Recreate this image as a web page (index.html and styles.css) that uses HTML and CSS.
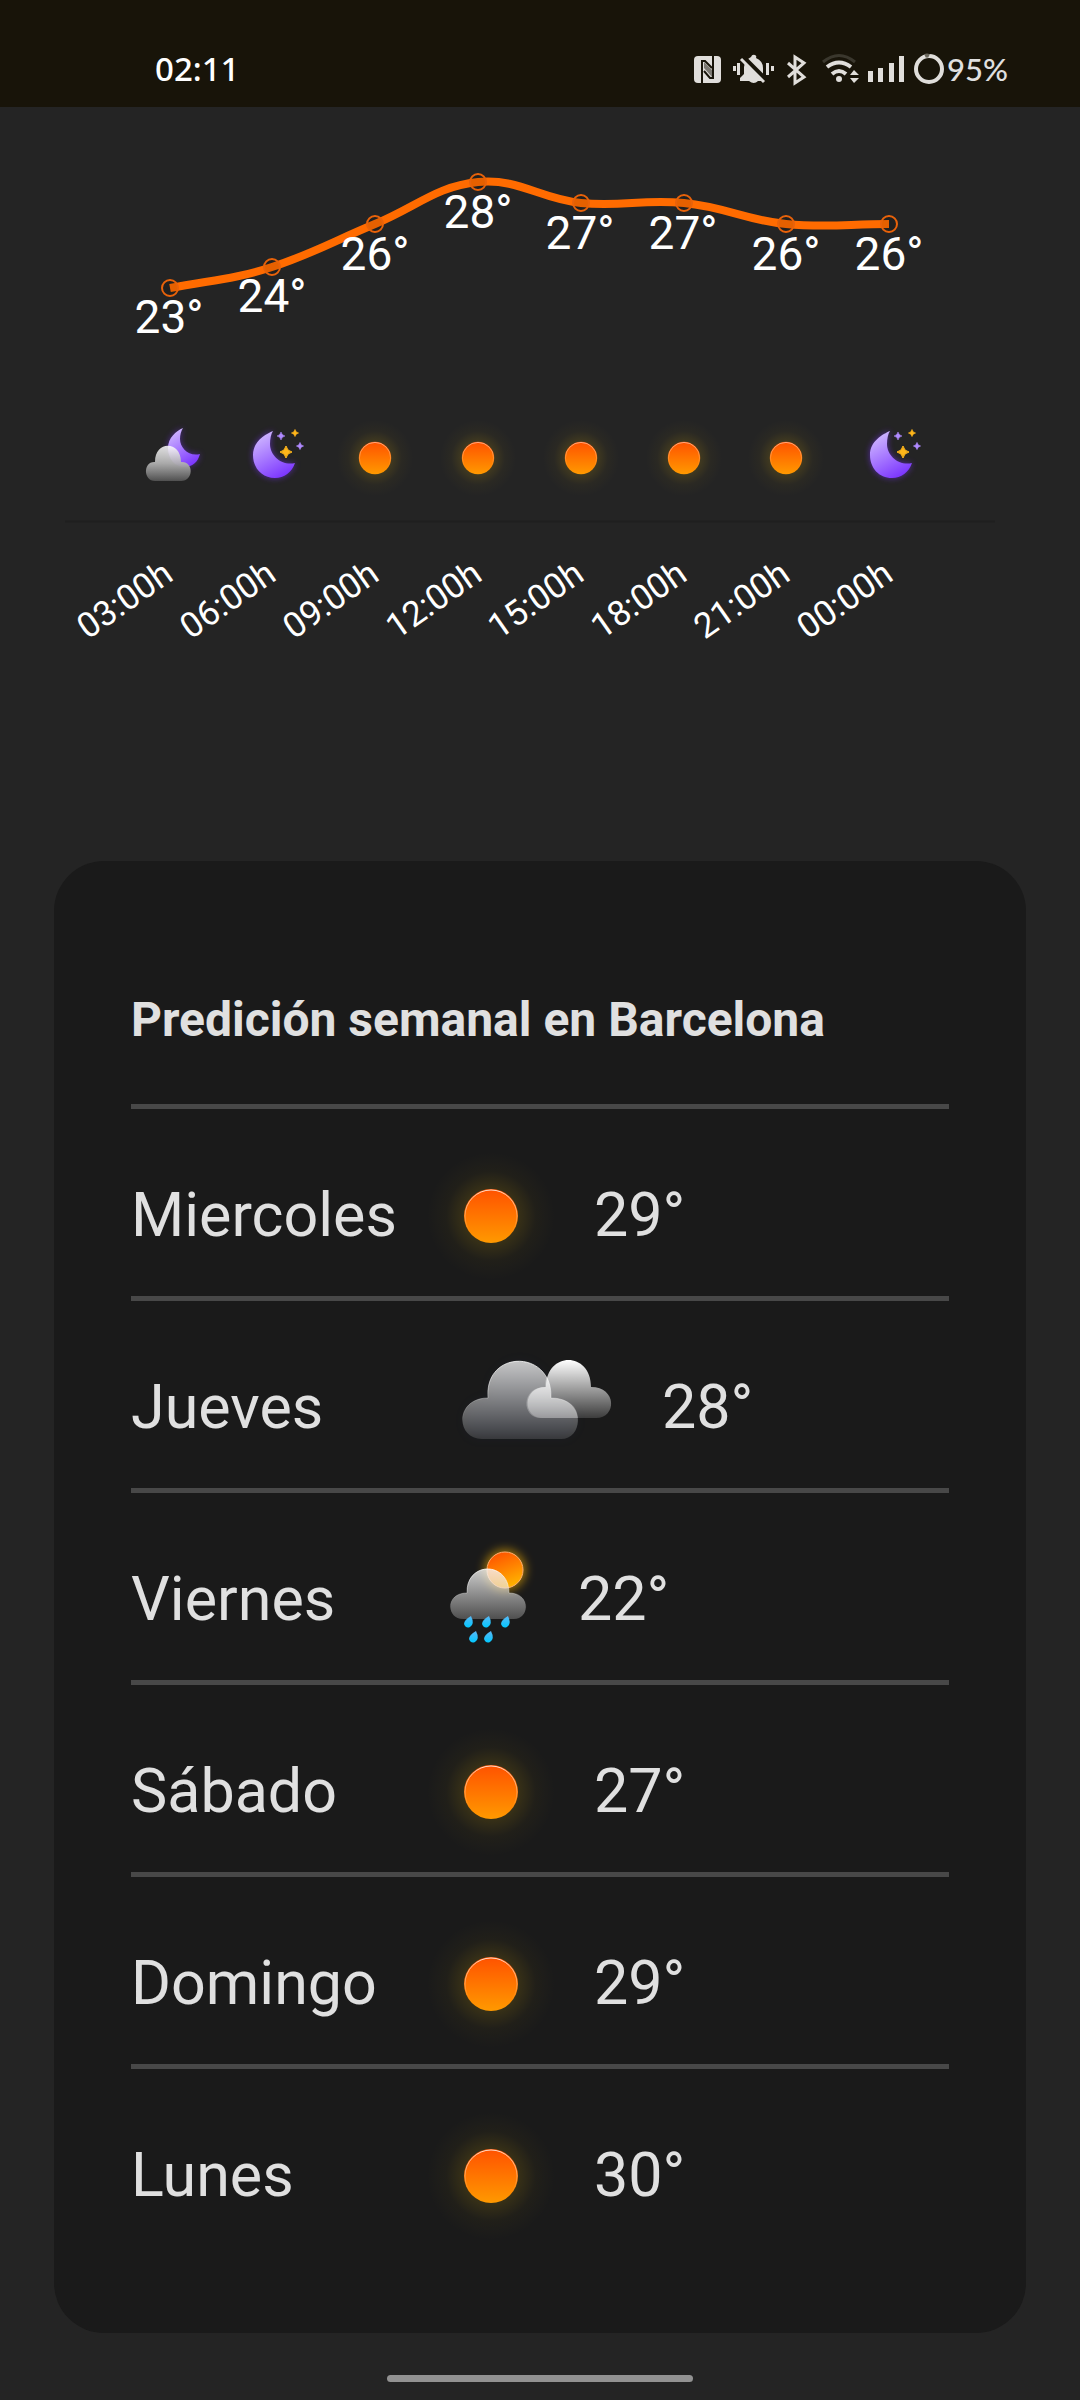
FILE: index.html
```html
<!DOCTYPE html>
<html lang="es">
<head>
<meta charset="utf-8">
<meta name="viewport" content="width=device-width, initial-scale=1">
<title>Barcelona</title>
<link rel="stylesheet" href="styles.css">
</head>
<body>
<svg class="defs" aria-hidden="true">
  <defs>
    <linearGradient id="sunFill" x1="0" y1="0" x2="0" y2="1"><stop offset="0" stop-color="#ff5200"/><stop offset="1" stop-color="#ff9900"/></linearGradient>
    <linearGradient id="rainSun" x1="0.3" y1="0" x2="0.7" y2="1"><stop offset="0" stop-color="#ff5200"/><stop offset="1" stop-color="#ffb800"/></linearGradient>
    <linearGradient id="rim" x1="0" y1="0" x2="0" y2="1"><stop offset="0" stop-color="#fff" stop-opacity=".8"/><stop offset=".8" stop-color="#fff" stop-opacity="0"/></linearGradient>
    <linearGradient id="cloudFill" x1="0" y1="0" x2="0" y2="1"><stop offset="0" stop-color="#fff"/><stop offset="1" stop-color="#fff" stop-opacity=".15"/></linearGradient>
    <linearGradient id="frontCloud" x1="0" y1="0" x2="0" y2="1"><stop offset="0" stop-color="#fff" stop-opacity=".75"/><stop offset="1" stop-color="#fff" stop-opacity=".13"/></linearGradient>
    <linearGradient id="nightCloud" x1="0" y1="0" x2="0" y2="1"><stop offset="0" stop-color="#fff" stop-opacity=".85"/><stop offset=".5" stop-color="#b0b0b0" stop-opacity=".95"/><stop offset="1" stop-color="#505050"/></linearGradient>
    <linearGradient id="moonFill" x1="0.2" y1="0" x2="0.7" y2="1"><stop offset="0" stop-color="#d3bdff"/><stop offset="1" stop-color="#7a33ff"/></linearGradient>
    <linearGradient id="dropFill" x1="0" y1="0" x2="0" y2="1"><stop offset="0" stop-color="#5cb8f5"/><stop offset="1" stop-color="#00c8ff"/></linearGradient>
    <radialGradient id="sunGlow"><stop offset="0" stop-color="#ffc800" stop-opacity=".24"/><stop offset=".42" stop-color="#ffc800" stop-opacity=".13"/><stop offset=".7" stop-color="#ffc800" stop-opacity=".03"/><stop offset="1" stop-color="#ffc800" stop-opacity="0"/></radialGradient>
    <filter id="blur" x="-50%" y="-50%" width="200%" height="200%"><feGaussianBlur stdDeviation="5"/></filter>
    <filter id="smallBlur" x="-50%" y="-50%" width="200%" height="200%"><feGaussianBlur stdDeviation="3"/></filter>
    <path id="moonShape" d="M153 431C146 434 133 441 133 455C133 468 142 478 155 478C164 478 172 472 175 463C162 466 150 456 150 444C150 439 151 434 153 431Z"/>
    <path id="starShape" d="M0-6Q1-1 6 0Q1 1 0 6Q-1 1-6 0Q-1-1 0-6Z"/>

    <g id="sun">
      <circle r="64" fill="url(#sunGlow)"/>
      <circle r="27" fill="url(#sunFill)"/>
      <circle r="26" fill="none" stroke="url(#rim)" stroke-width="1"/>
    </g>
    <g id="moon">
      <use href="#moonShape" fill="#7a33ff" opacity=".6" filter="url(#smallBlur)"/>
      <use href="#moonShape" fill="url(#moonFill)"/>
      <use href="#starShape" transform="translate(166 452)" fill="#ffb61a" stroke="#ffb61a"/>
      <g fill="#b08aff" stroke="#b08aff">
        <use href="#starShape" transform="translate(161 436) scale(.65)"/>
        <use href="#starShape" transform="translate(180 446) scale(.6)"/>
      </g>
      <use href="#starShape" transform="translate(175 433) scale(.6)" fill="#ffb61a" stroke="#ffb61a"/>
    </g>
    <g id="night">
      <path d="M183 428C176 431 168 438 168 448C168 459 175 467 185 467C192 467 198 462 200 454C189 457 180 448 180 439C180 435 181 431 183 428Z" fill="#7a33ff" opacity=".5" filter="url(#smallBlur)"/>
      <path d="M183 428C176 431 168 438 168 448C168 459 175 467 185 467C192 467 198 462 200 454C189 457 180 448 180 439C180 435 181 431 183 428Z" fill="url(#moonFill)"/>
      <path d="M155 462C155 440 181 441 181 462C194 461 194 481 181 481H155C143 481 143 461 155 462Z" fill="url(#nightCloud)"/>
    </g>
  </defs>
</svg>

<header class="status">
  <time class="clock">02:11</time>
  <svg class="status-icons" viewBox="690 50 256 36" role="img" aria-label="NFC, silencio, Bluetooth, wifi, señal, batería">
    <rect x="693" y="55" width="27" height="27" rx="4" fill="#e0dedb"/>
    <path d="M701 82V60H704L711 67M712 55V77H709L703 70" fill="none" stroke="#181409" stroke-width="2"/>
    <path d="M703 61L711 69V76L703 67Z" fill="#181409" opacity=".5"/>
    <g fill="#e0dedb">
      <path d="M750 56Q751 53 754 54Q756 55 755 57Q762 60 762 67V74L766 78V80H739V77L743 73V66Q744 59 750 56ZM748 80H757Q753 84 748 80Z"/>
      <path d="M732 65h3v5h-3zM736 62h3v12h-3zM765 62h3v12h-3zM770 65h3v5h-3z"/>
    </g>
    <path d="M742 56L766 80" stroke="#181409" stroke-width="5"/>
    <path d="M740 58L763 81" stroke="#e0dedb" stroke-width="3"/>
    <path d="M787 62L803 76L794 82V56L803 62L787 76" fill="none" stroke="#e0dedb" stroke-width="3"/>
    <path d="M822 61Q838 48 854 61" fill="none" stroke="#3a372d" stroke-width="3"/>
    <path d="M826 66Q838 57 850 66M831 73Q838 67 845 73" fill="none" stroke="#e0dedb" stroke-width="4"/>
    <circle cx="838" cy="78" r="3" fill="#e0dedb"/>
    <path d="M849 74L853 69L858 74ZM849 77H858L853 82ZM867 70h5v11h-5zM877 67h5v14h-5zM888 62h5v19h-5zM898 55h5v26h-5z" fill="#e0dedb"/>
    <circle cx="928" cy="68" r="13" fill="none" stroke="#e0dedb" stroke-width="4"/>
    <path d="M924 55Q926 54 928 55" fill="none" stroke="#6a675d" stroke-width="4"/>
  </svg>
  <span class="battery">95%</span>
</header>

<main>
  <svg class="chart" viewBox="0 107 1080 754" role="img" aria-label="Temperatura por horas">
    <path d="M65 521.5H995" stroke="#1f1f1f" stroke-width="2"/>
    <path class="curve" d="M170 288C211 280 232 280 272 267S334 241 375 224S437 186 478 182S540 199 581 203S642 199 684 203S745 220 786 224S848 224 889 224"/>
    <g class="points">
      <circle cx="170" cy="288" r="8"/><circle cx="272" cy="267" r="8"/><circle cx="375" cy="224" r="8"/><circle cx="478" cy="182" r="8"/>
      <circle cx="581" cy="203" r="8"/><circle cx="684" cy="203" r="8"/><circle cx="786" cy="224" r="8"/><circle cx="889" cy="224" r="8"/>
    </g>
    <g class="temps">
      <text x="169" y="333">23°</text><text x="272" y="312">24°</text><text x="375" y="270">26°</text><text x="478" y="228">28°</text>
      <text x="580" y="249">27°</text><text x="683" y="249">27°</text><text x="786" y="270">26°</text><text x="889" y="270">26°</text>
    </g>
    <use href="#night"/>
    <use href="#moon" x="120"/>
    <use href="#sun" transform="translate(375 458) scale(.6)"/>
    <use href="#sun" transform="translate(478 458) scale(.6)"/>
    <use href="#sun" transform="translate(581 458) scale(.6)"/>
    <use href="#sun" transform="translate(684 458) scale(.6)"/>
    <use href="#sun" transform="translate(786 458) scale(.6)"/>
    <use href="#moon" x="737"/>
    <g class="hours">
      <text transform="translate(175 579) rotate(-35)">03:00h</text>
      <text transform="translate(278 579) rotate(-35)">06:00h</text>
      <text transform="translate(381 579) rotate(-35)">09:00h</text>
      <text transform="translate(484 579) rotate(-35)">12:00h</text>
      <text transform="translate(586 579) rotate(-35)">15:00h</text>
      <text transform="translate(689 579) rotate(-35)">18:00h</text>
      <text transform="translate(792 579) rotate(-35)">21:00h</text>
      <text transform="translate(895 579) rotate(-35)">00:00h</text>
    </g>
  </svg>

  <section class="card">
    <h1>Predición semanal en Barcelona</h1>
    <ul class="week">
      <li><span class="day">Miercoles</span><svg class="icon" viewBox="-60 -42 120 82"><use href="#sun"/></svg><span>29°</span></li>
      <li><span class="day">Jueves</span>
        <svg class="icon wide" viewBox="431 1366 188 82">
          <path d="M479 1439C458 1439 457 1398 488 1398C488 1348 552 1348 552 1398C584 1398 584 1439 561 1439Z" fill="#1a2a5a" opacity=".12" filter="url(#blur)"/>
          <path d="M543 1418C522 1418 522 1387 546 1387C546 1351 591 1351 591 1387C617 1387 617 1418 596 1418Z" fill="url(#cloudFill)"/>
          <path d="M482 1439C455 1439 455 1398 488 1398C484 1349 553 1349 551 1398C586 1398 584 1439 561 1439Z" fill="url(#frontCloud)" stroke="url(#rim)"/>
          <path d="M541 1418C521 1418 521 1387 545 1387Q545 1380 547 1376Q551 1385 551 1398C567 1398 577 1405 578 1418Z" fill="#fff" opacity=".25"/>
        </svg><span>28°</span></li>
      <li><span class="day">Viernes</span>
        <svg class="icon narrow" viewBox="431 1558 104 82">
          <circle cx="505" cy="1570" r="21" fill="#ffb800" opacity=".55" filter="url(#blur)"/>
          <circle cx="505" cy="1570" r="18" fill="url(#rainSun)" stroke="#ffad70" stroke-width="1"/>
          <path d="M463 1619C446 1619 445 1593 467 1593C466 1561 509 1561 509 1593C531 1593 530 1619 514 1619Z" fill="#888" opacity=".25"/>
          <path d="M463 1619C446 1619 445 1593 467 1593C466 1561 509 1561 509 1593C531 1593 530 1619 514 1619Z" fill="url(#frontCloud)" stroke="url(#rim)"/>
          <g fill="url(#dropFill)">
            <path id="drop" d="M471 1616Q464 1620 464 1624Q466 1629 470 1627Q475 1624 471 1616Z"/>
            <use href="#drop" x="18"/><use href="#drop" x="37"/><use href="#drop" x="5" y="15"/><use href="#drop" x="20" y="15"/>
          </g>
        </svg><span>22°</span></li>
      <li><span class="day">Sábado</span><svg class="icon" viewBox="-60 -42 120 82"><use href="#sun"/></svg><span>27°</span></li>
      <li><span class="day">Domingo</span><svg class="icon" viewBox="-60 -42 120 82"><use href="#sun"/></svg><span>29°</span></li>
      <li><span class="day">Lunes</span><svg class="icon" viewBox="-60 -42 120 82"><use href="#sun"/></svg><span>30°</span></li>
    </ul>
  </section>
</main>
<footer class="gesture"></footer>
</body>
</html>
```
FILE: styles.css
```css
* { box-sizing: border-box; }

body {
  margin: 0;
  background: #242424;
  color: #e0e0e0;
  font-family: Roboto, "Liberation Sans", sans-serif;
}

.defs { position: absolute; width: 0; height: 0; }

.status {
  display: flex;
  align-items: center;
  height: 107px;
  padding: 30px 72px 0 155px;
  background: #181409;
}
.clock {
  margin-right: auto;
  color: #fff;
  font: 500 33px/40px "Noto Sans", sans-serif;
}
.status-icons { width: 256px; height: 36px; }
.battery { font: 500 31px/40px Lato, sans-serif; }

.chart { display: block; width: 100%; overflow: visible; }
.curve { fill: none; stroke: #ff6b00; stroke-width: 8; }
.points { fill: rgba(0, 0, 0, .1); stroke: #e8620a; stroke-width: 2; }
.temps { fill: #fff; font-size: 46px; text-anchor: middle; }
.hours { fill: #fff; font-size: 35px; text-anchor: end; }

.card {
  margin: 0 5%;
  padding: 77px;
  border-radius: 50px;
  background: #1a1a1a;
}
h1 {
  margin: 0;
  padding: 53px 0 55px;
  font-size: 48px;
  font-weight: 700;
  line-height: 58px;
}
.week { margin: 0; padding: 0; list-style: none; }
.week li {
  display: flex;
  align-items: center;
  padding: 65px 0 40px;
  border-top: 5px solid #484848;
  font-size: 61px;
  line-height: 82px;
}
.day { flex: 0 0 300px; }
.icon { flex: none; width: 120px; height: 82px; margin-right: 43px; overflow: visible; }
.icon.wide { width: 188px; }
.icon.narrow { width: 104px; }

.gesture {
  width: 306px;
  height: 7px;
  margin: 42px auto 18px;
  border-radius: 4px;
  background: #929292;
}
```
